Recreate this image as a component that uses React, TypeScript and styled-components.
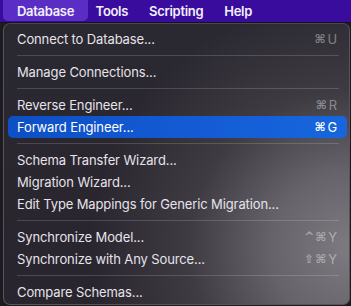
import React from "react";
import styled, { createGlobalStyle } from "styled-components";

const Global = createGlobalStyle`
  html, body { margin: 0; padding: 0; background: #1c1b1f; }
  body { font-family: Inter, "Noto Sans", "DejaVu Sans", sans-serif; -webkit-font-smoothing: antialiased; }
  #root { width: 351px; height: 306px; overflow: hidden; }
`;

const Screen = styled.div`
  width: 351px;
  height: 306px;
  display: flex;
  flex-direction: column;
  background: #1c1b1f;
  overflow: hidden;
`;

const MenuBar = styled.div`
  height: 22px;
  flex: 0 0 22px;
  background: #3a0c9e;
  display: flex;
  align-items: stretch;
  padding-left: 6px;
  border-bottom: 1px solid #15121b;
`;

const BarItem = styled.div<{ $active?: boolean }>`
  display: flex;
  align-items: center;
  color: #f3f0fa;
  font-size: 13px;
  font-weight: 600;
  letter-spacing: -0.3px;
  padding: 0 ${(p) => (p.$active ? 14 : 10.5)}px;
  margin: 0 ${(p) => (p.$active ? -3 : 0)}px;
  background: ${(p) => (p.$active ? "#5a2ec4" : "transparent")};
  border-radius: 0 0 5px 5px;
  height: 21px;
`;

const DropArea = styled.div`
  flex: 1;
  display: flex;
  padding-left: 3px;
`;

const Menu = styled.div`
  width: 347px;
  height: 282px;
  box-sizing: border-box;
  border: 1px solid #57545c;
  border-top-color: #4a4750;
  border-radius: 7px;
  padding: 4px 2px 1px 4px;
  display: flex;
  flex-direction: column;
  background:
    radial-gradient(ellipse 75% 90% at 100% 80%, #7d7b81 0%, #66646a 30%, #3e3b43 62%, rgba(40,36,44,0) 100%),
    linear-gradient(180deg, #2a2830 0%, #29252e 100%);
`;

const Item = styled.div<{ $selected?: boolean }>`
  height: 22px;
  flex: 0 0 22px;
  display: flex;
  align-items: center;
  justify-content: space-between;
  padding: 0 10px 0 9px;
  border-radius: 5px;
  font-size: 13px;
  letter-spacing: -0.12px;
  color: ${(p) => (p.$selected ? "#ffffff" : "#e6e3ea")};
  background: ${(p) => (p.$selected ? "linear-gradient(90deg, #0d4fc5 0%, #135ad3 50%, #1766dd 100%)" : "transparent")};
`;

const Label = styled.span`
  white-space: nowrap;
`;

const Shortcut = styled.span<{ $selected?: boolean }>`
  display: flex;
  align-items: center;
  gap: 1px;
  font-size: 13px;
  color: ${(p) => (p.$selected ? "#ffffff" : "rgba(255, 255, 255, 0.4)")};
`;

const Key = styled.span`
  font-family: "DejaVu Sans", sans-serif;
  font-size: 12px;
  font-weight: 600;
`;

const Letter = styled.span`
  margin-left: 1px;
`;

const Separator = styled.div`
  height: 11px;
  flex: 0 0 11px;
  display: flex;
  align-items: center;
  padding: 0 8px 0 9px;
  &::after {
    content: "";
    flex: 1;
    height: 1px;
    background: rgba(255, 255, 255, 0.16);
  }
`;

type Entry =
  | { kind: "sep" }
  | { kind: "item"; label: string; mods?: string[]; key?: string; selected?: boolean };

const entries: Entry[] = [
  { kind: "item", label: "Connect to Database...", mods: ["⌘"], key: "U" },
  { kind: "sep" },
  { kind: "item", label: "Manage Connections..." },
  { kind: "sep" },
  { kind: "item", label: "Reverse Engineer...", mods: ["⌘"], key: "R" },
  { kind: "item", label: "Forward Engineer...", mods: ["⌘"], key: "G", selected: true },
  { kind: "sep" },
  { kind: "item", label: "Schema Transfer Wizard..." },
  { kind: "item", label: "Migration Wizard..." },
  { kind: "item", label: "Edit Type Mappings for Generic Migration..." },
  { kind: "sep" },
  { kind: "item", label: "Synchronize Model...", mods: ["^", "⌘"], key: "Y" },
  { kind: "item", label: "Synchronize with Any Source...", mods: ["⇧", "⌘"], key: "Y" },
  { kind: "sep" },
  { kind: "item", label: "Compare Schemas..." },
];

export default function App() {
  return (
    <Screen>
      <Global />
      <MenuBar>
        <BarItem $active>Database</BarItem>
        <BarItem>Tools</BarItem>
        <BarItem>Scripting</BarItem>
        <BarItem>Help</BarItem>
      </MenuBar>
      <DropArea>
        <Menu>
          {entries.map((e, i) =>
            e.kind === "sep" ? (
              <Separator key={i} />
            ) : (
              <Item key={i} $selected={e.selected}>
                <Label>{e.label}</Label>
                {e.key && (
                  <Shortcut $selected={e.selected}>
                    {e.mods?.map((m, j) => (
                      <Key key={j}>{m}</Key>
                    ))}
                    <Letter>{e.key}</Letter>
                  </Shortcut>
                )}
              </Item>
            )
          )}
        </Menu>
      </DropArea>
    </Screen>
  );
}
